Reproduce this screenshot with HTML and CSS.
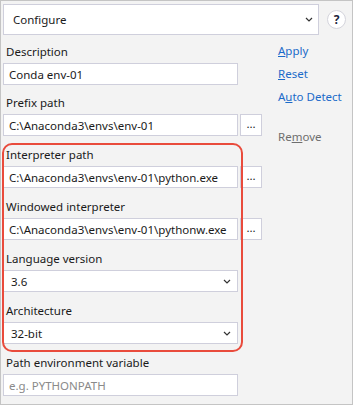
FILE: index.html
```html
<!DOCTYPE html>
<html lang="en">
<head>
<meta charset="UTF-8">
<meta name="viewport" content="width=device-width, initial-scale=1.0">
<title>Configure environment</title>
<link rel="stylesheet" href="styles.css">
</head>
<body>
<div class="topbar">
  <div class="combo">
    <span>Configure</span>
    <svg class="chevron" width="8" height="5" viewBox="0 0 8 5"><path d="M1 1l3 3 3-3" fill="none" stroke="#333" stroke-width="1.2"/></svg>
  </div>
  <button class="help" type="button">?</button>
</div>

<div class="content">
  <div class="fields">
    <div class="group">
      <label for="description">Description</label>
      <div class="row">
        <input type="text" id="description" value="Conda env-01">
      </div>
    </div>
    <div class="group">
      <label for="prefix">Prefix path</label>
      <div class="row">
        <input type="text" id="prefix" value="C:\Anaconda3\envs\env-01">
        <button class="browse" type="button">...</button>
      </div>
    </div>

    <div class="highlight">
      <div class="outline"></div>
      <div class="group">
        <label for="interpreter">Interpreter path</label>
        <div class="row">
          <input type="text" id="interpreter" value="C:\Anaconda3\envs\env-01\python.exe">
          <button class="browse" type="button">...</button>
        </div>
      </div>
      <div class="group">
        <label for="windowed">Windowed interpreter</label>
        <div class="row">
          <input type="text" id="windowed" value="C:\Anaconda3\envs\env-01\pythonw.exe">
          <button class="browse" type="button">...</button>
        </div>
      </div>
      <div class="group">
        <label>Language version</label>
        <div class="row">
          <div class="select">
            <span>3.6</span>
            <svg class="chevron" width="8" height="5" viewBox="0 0 8 5"><path d="M1 1l3 3 3-3" fill="none" stroke="#333" stroke-width="1.2"/></svg>
          </div>
        </div>
      </div>
      <div class="group">
        <label>Architecture</label>
        <div class="row">
          <div class="select">
            <span>32-bit</span>
            <svg class="chevron" width="8" height="5" viewBox="0 0 8 5"><path d="M1 1l3 3 3-3" fill="none" stroke="#333" stroke-width="1.2"/></svg>
          </div>
        </div>
      </div>
    </div>

    <div class="group last">
      <label for="pathvar">Path environment variable</label>
      <div class="row">
        <input type="text" id="pathvar" placeholder="e.g. PYTHONPATH">
      </div>
    </div>
  </div>

  <div class="actions">
    <a href="#" class="link"><u>A</u>pply</a>
    <a href="#" class="link"><u>R</u>eset</a>
    <a href="#" class="link">A<u>u</u>to Detect</a>
    <a href="#" class="link disabled">Re<u>m</u>ove</a>
  </div>
</div>
</body>
</html>
```

FILE: styles.css
```css
html, body {
  height: 100%;
}
body {
  font-family: 'Noto Sans', 'Segoe UI', sans-serif;
  font-size: 11.5px;
  color: #1a1a1a;
  background-color: #f3f3f3;
  margin: 0;
  padding: 3px 2px;
  border: 1px solid #c4c4c4;
  box-sizing: border-box;
}
.topbar {
  display: flex;
  align-items: center;
}
.combo {
  width: 316px;
  height: 31px;
  box-sizing: border-box;
  background: #fff;
  border: 1px solid #cfcfdc;
  display: flex;
  align-items: center;
  justify-content: space-between;
  padding: 0 5px 0 9px;
}
.help {
  width: 19px;
  height: 19px;
  margin-left: 8px;
  padding: 0;
  border-radius: 50%;
  border: 1px solid #d4d4dc;
  background: #fff;
  color: #1b1f3b;
  font-family: 'Noto Sans', sans-serif;
  font-weight: 700;
  font-size: 12px;
  line-height: 17px;
}
.content {
  display: flex;
  margin-top: 9px;
}
.fields {
  width: 260px;
}
.group {
  margin-bottom: 10px;
}
.group label {
  display: block;
  line-height: 16px;
  padding-left: 3px;
  margin-bottom: 3px;
}
.row {
  display: flex;
  gap: 2px;
}
.row input[type="text"],
.select {
  width: 235px;
  height: 22px;
  box-sizing: border-box;
  border: 1px solid #cfcfdc;
  background: #fff;
  font-family: inherit;
  font-size: 11.5px;
  color: #1a1a1a;
  padding: 0 5px;
  margin: 0;
  outline: none;
}
.row input::placeholder {
  color: #8a8a8a;
}
.select {
  display: flex;
  align-items: center;
  justify-content: space-between;
  padding: 0 6px 0 7px;
}
.browse {
  width: 22px;
  height: 22px;
  padding: 0 0 4px;
  border: 1px solid #cfcfdc;
  background: #fff;
  font-family: inherit;
  font-size: 11.5px;
  color: #1a1a1a;
}
/* red annotation drawn around the interpreter settings */
.highlight {
  position: relative;
  margin-top: -3px;
  padding: 4px 0 8px;
}
.highlight .group {
  margin-bottom: 11px;
}
.highlight .group:last-child {
  margin-bottom: 0;
}
.outline {
  position: absolute;
  top: 0;
  bottom: 0;
  left: -1px;
  width: 241px;
  border: 2px solid #e94b3c;
  border-radius: 10px;
  box-sizing: border-box;
  pointer-events: none;
}
.group.last {
  margin-top: 3px;
}
.actions {
  display: flex;
  flex-direction: column;
  align-items: flex-start;
  gap: 7px;
  padding-left: 15px;
  margin-top: -1px;
}
.link {
  line-height: 16px;
  color: #1b6ac9;
  text-decoration: none;
}
.link.disabled {
  color: #6e6e6e;
  margin-top: 17px;
}
```
